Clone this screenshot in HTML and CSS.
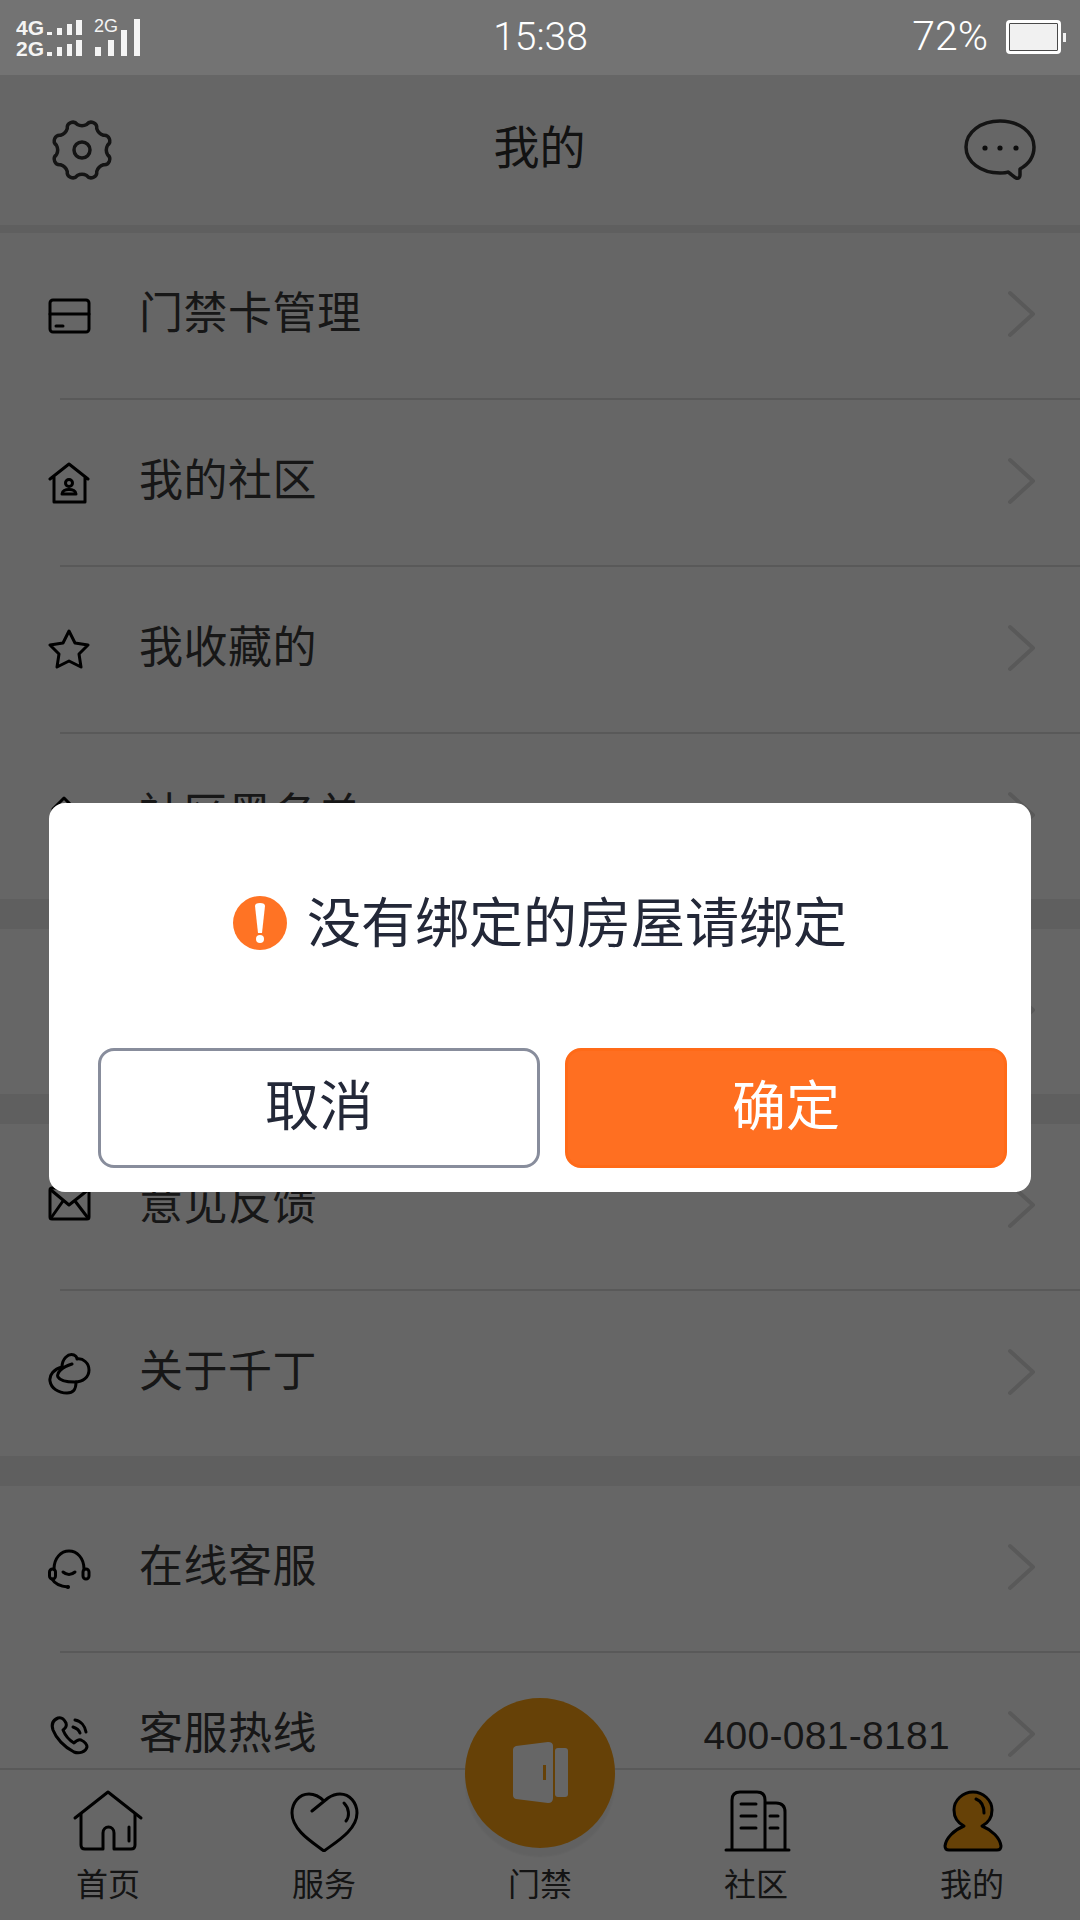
FILE: index.html
```html
<!DOCTYPE html>
<html lang="zh-CN">
<head>
  <meta charset="UTF-8">
  <title>我的</title>
  <meta name="viewport" content="width=device-width, initial-scale=1">
  <link rel="stylesheet" href="styles.css">
</head>
<body>
  <div class="screen">
    <div class="statusbar">
      <svg class="signal" width="130" height="48" viewBox="0 -8 130 48">
        <text class="sig-text" x="0" y="16">4G</text>
        <text class="sig-text" x="0" y="37">2G</text>
        <text class="sig-thin" x="78" y="13">2G</text>
        <path d="M31 13h5v3h-5zM41 9h5v7h-5zM51 5h5v11h-5zM60 1h6v15h-6z"/>
        <path d="M31 33h5v4h-5zM41 28h5v9h-5zM51 25h5v12h-5zM60 21h6v16h-6z"/>
        <path d="M79 28h6v9h-6zM92 21h6v16h-6zM105 11h6v26h-6zM118 0h6v37h-6z"/>
      </svg>
      <div class="clock">15:38</div>
      <div class="power">
        <span>72%</span>
        <div class="battery"></div>
      </div>
    </div>

    <div class="navbar">
      <svg class="ico gear" width="66" height="66" viewBox="-33 -33 66 66">
        <path d="M25.56 4.74A5.6 5.6 0 0 1 21.43 14.73A10 10 0 0 0 14.73 21.43A5.6 5.6 0 0 1 4.74 25.56A10 10 0 0 0 -4.74 25.56A5.6 5.6 0 0 1 -14.73 21.43A10 10 0 0 0 -21.43 14.73A5.6 5.6 0 0 1 -25.56 4.74A10 10 0 0 0 -25.56 -4.74A5.6 5.6 0 0 1 -21.43 -14.73A10 10 0 0 0 -14.73 -21.43A5.6 5.6 0 0 1 -4.74 -25.56A10 10 0 0 0 4.74 -25.56A5.6 5.6 0 0 1 14.73 -21.43A10 10 0 0 0 21.43 -14.73A5.6 5.6 0 0 1 25.56 -4.74A10 10 0 0 0 25.56 4.74Z"/>
        <circle r="8"/>
      </svg>
      <h1>我的</h1>
      <svg class="ico bubble" width="72" height="62" viewBox="0 0 72 62">
        <path d="M36 2C17 2 2 13 2 28C2 43 17 54 36 54C39 54 42 54 44 53C47 55 50 58 52 59C55 60 56 58 56 56V50C65 45 70 37 70 28C70 13 55 2 36 2Z"/>
        <circle class="solid" cx="21" cy="29" r="2.6"/>
        <circle class="solid" cx="36" cy="29" r="2.6"/>
        <circle class="solid" cx="52" cy="29" r="2.6"/>
      </svg>
    </div>

    <div class="list">
      <div class="group">
        <div class="row">
          <svg class="ico" width="44" height="44" viewBox="0 0 44 44"><rect x="2" y="6" width="39" height="32" rx="3"/><path d="M2 20H41M8 32H15"/></svg>
          <span class="label">门禁卡管理</span>
          <svg class="chevron" width="30" height="48" viewBox="0 0 30 48"><path d="M3 3L26 24L3 45"/></svg>
        </div>
        <div class="row">
          <svg class="ico" width="44" height="44" viewBox="0 0 44 44"><path d="M2 18L21 3L40 18M6 16V41H37V16"/><circle cx="21" cy="22" r="3.5"/><path d="M14 33C14 27 28 27 28 33Z"/></svg>
          <span class="label">我的社区</span>
          <svg class="chevron" width="30" height="48" viewBox="0 0 30 48"><path d="M3 3L26 24L3 45"/></svg>
        </div>
        <div class="row">
          <svg class="ico" width="44" height="44" viewBox="0 0 44 44"><path d="M21 3L27 15L40 17L31 26L33 39L21 33L9 39L11 26L2 17L15 15Z"/></svg>
          <span class="label">我收藏的</span>
          <svg class="chevron" width="30" height="48" viewBox="0 0 30 48"><path d="M3 3L26 24L3 45"/></svg>
        </div>
        <div class="row">
          <svg class="ico" width="44" height="44" viewBox="0 0 44 44"><path d="M5 14L16 3L27 14V40H5Z"/></svg>
          <span class="label">社区黑名单</span>
          <svg class="chevron" width="30" height="48" viewBox="0 0 30 48"><path d="M3 3L26 24L3 45"/></svg>
        </div>
      </div>
      <div class="group">
        <div class="row">
          <svg class="chevron" width="30" height="48" viewBox="0 0 30 48"><path d="M3 3L26 24L3 45"/></svg>
        </div>
      </div>
      <div class="group">
        <div class="row">
          <svg class="ico" width="44" height="44" viewBox="0 0 44 44"><rect x="2" y="3" width="39" height="31" rx="2"/><path d="M3 5L21 20L40 5M3 33L15 16M40 33L27 16"/></svg>
          <span class="label">意见反馈</span>
          <svg class="chevron" width="30" height="48" viewBox="0 0 30 48"><path d="M3 3L26 24L3 45"/></svg>
        </div>
        <div class="row">
          <svg class="ico" width="44" height="44" viewBox="0 0 44 44"><path d="M14 15C14 7 20 1 26 3C28 4 29 6 29 7C35 6 41 11 41 18C41 25 35 30 27 30C20 30 12 29 10 25C8 21 14 15 24 12"/><path d="M14 15C6 17 1 23 2 29C3 36 10 41 19 41C25 41 28 38 28 30"/></svg>
          <span class="label">关于千丁</span>
          <svg class="chevron" width="30" height="48" viewBox="0 0 30 48"><path d="M3 3L26 24L3 45"/></svg>
        </div>
      </div>
      <div class="group">
        <div class="row">
          <svg class="ico" width="44" height="44" viewBox="0 0 44 44"><path d="M6 22C6 11 13 4 21 4C29 4 36 11 36 22M15 25Q21 30 27 25M4 32Q8 39 20 40"/><rect x="1.5" y="22" width="6" height="10" rx="3"/><rect x="35" y="22" width="6" height="10" rx="3"/><circle class="solid" cx="20" cy="40" r="2"/></svg>
          <span class="label">在线客服</span>
          <svg class="chevron" width="30" height="48" viewBox="0 0 30 48"><path d="M3 3L26 24L3 45"/></svg>
        </div>
        <div class="row">
          <svg class="ico" width="44" height="44" viewBox="0 0 44 44"><path d="M10 4C5 6 3 10 5 16C8 24 16 33 26 38C31 40 38 38 39 33C39 30 37 28 33 26C30 25 28 27 26 29C21 26 17 21 15 16C18 14 19 12 18 9C16 5 13 3 10 4Z"/><path d="M27 6C33 7 37 12 38 18M25 13C28 14 31 16 32 19"/></svg>
          <span class="label">客服热线</span>
          <span class="phone">400-081-8181</span>
          <svg class="chevron" width="30" height="48" viewBox="0 0 30 48"><path d="M3 3L26 24L3 45"/></svg>
        </div>
      </div>
    </div>

    <div class="tabbar">
      <div class="tab">
        <svg class="ico tab-ico" width="72" height="62" viewBox="0 0 72 62"><path d="M3 28L36 2L69 28"/><path d="M9 24V55Q9 59 13 59H31V43C31 35 42 35 42 43V59H59Q63 59 63 55V24M57 37V51"/></svg>
        <span>首页</span>
      </div>
      <div class="tab">
        <svg class="ico tab-ico" width="72" height="62" viewBox="0 0 72 62"><path d="M36 11C32 7 27 4 21 4C11 4 4 13 4 23C4 40 24 52 36 61C48 52 69 40 69 23C69 13 62 4 52 4C47 4 43 6 40 8L24 21"/><path d="M56 13C61 18 62 26 58 31"/></svg>
        <span>服务</span>
      </div>
      <div class="tab">
        <div class="door-btn">
          <svg width="56" height="62" viewBox="0 0 56 62">
            <path class="door" d="M4 4L36 0Q41 0 41 4V56Q41 61 36 61L4 57Q1 56 1 53V8Q1 5 4 4Z"/>
            <rect class="door" x="43" y="6" width="13" height="49" rx="3"/>
            <rect class="door-handle" x="31" y="23" width="3" height="15"/>
          </svg>
        </div>
        <div class="tab-ico"></div>
        <span>门禁</span>
      </div>
      <div class="tab">
        <svg class="ico tab-ico" width="72" height="62" viewBox="0 0 72 62"><path d="M6 60H69M12 59V10Q12 2 20 2H37Q45 2 45 10V59M45 13H56Q65 13 65 22V59M21 14H36M21 26H36M21 38H36M50 26H58M50 38H58"/></svg>
        <span>社区</span>
      </div>
      <div class="tab">
        <svg class="ico tab-ico" width="72" height="62" viewBox="0 0 72 62"><path class="me" d="M28 36C22 33 18 27 18 20C18 10 27 2 37 2C47 2 56 10 56 20C56 27 52 33 46 36C56 40 64 48 65 56C65 59 63 60 61 60H13C11 60 9 59 9 56C10 48 18 40 28 36Z"/><path d="M40 9C45 11 48 16 48 23"/></svg>
        <span>我的</span>
      </div>
    </div>

    <div class="mask">
      <div class="dialog">
        <div class="message">
          <svg width="54" height="54" viewBox="0 0 54 54">
            <circle class="alert-bg" cx="27" cy="27" r="27"/>
            <path class="alert-mark" d="M22 10Q22 7 27 7Q32 7 32 10L29 37H25Z"/>
            <circle class="alert-mark" cx="27" cy="43" r="4"/>
          </svg>
          <span>没有绑定的房屋请绑定</span>
        </div>
        <div class="actions">
          <button class="btn btn-cancel" type="button">取消</button>
          <button class="btn btn-ok" type="button">确定</button>
        </div>
      </div>
    </div>
  </div>
</body>
</html>
```

FILE: styles.css
```css
* {
  box-sizing: border-box;
}
body {
  margin: 0;
  font-family: "Noto Sans CJK SC", "Liberation Sans", sans-serif;
  background: #fff;
}
.screen {
  position: relative;
  width: 1080px;
  height: 1920px;
  display: flex;
  flex-direction: column;
  overflow: hidden;
  background: #fff;
}

/* status bar sits above the mask */
.statusbar {
  position: relative;
  z-index: 2;
  flex: none;
  height: 75px;
  padding: 0 15px 0 16px;
  display: grid;
  grid-template-columns: 1fr auto 1fr;
  align-items: center;
  background: #737373;
  color: #fff;
  font-family: Roboto, "Liberation Sans", sans-serif;
  font-weight: 300;
  font-size: 39px;
}
.signal {
  display: block;
  align-self: start;
  margin-top: 11px;
  fill: #f4f4f4;
}
.sig-text {
  font-family: "Liberation Sans", sans-serif;
  font-size: 21px;
  font-weight: 700;
}
.sig-thin {
  font-family: "Liberation Sans", sans-serif;
  font-size: 18px;
  font-weight: 400;
}
.clock {
  margin-top: -1px;
}
.power {
  display: flex;
  justify-content: flex-end;
  align-items: center;
  gap: 18px;
  margin-top: -4px;
  font-size: 41px;
}
.battery {
  position: relative;
  width: 55px;
  height: 34px;
  margin-right: 4px;
  margin-top: 2px;
  border: 3px solid #fff;
  border-radius: 4px;
  background: #f1f1f1;
  box-shadow: inset 0 0 0 1px #4a4a4a;
}
.battery::after {
  content: "";
  position: absolute;
  right: -8px;
  top: 10px;
  width: 3px;
  height: 9px;
  background: #f1f1f1;
}

.navbar {
  flex: none;
  height: 150px;
  padding: 0 44px 0 49px;
  display: flex;
  justify-content: space-between;
  align-items: center;
  background: #fff;
}
h1 {
  margin: -12px 0 0 0;
  font-size: 46px;
  font-weight: 400;
  color: #2e2e2e;
}

.ico {
  flex: none;
  fill: none;
  stroke: #000;
  stroke-width: 3;
  stroke-linecap: round;
  stroke-linejoin: round;
}
.ico .solid {
  fill: #000;
  stroke: none;
}
.gear,
.bubble {
  stroke: #333;
  stroke-width: 3.5;
}
.bubble .solid {
  fill: #222;
}

.list {
  flex: 1;
  min-height: 0;
  padding-top: 8px;
  overflow: hidden;
  background: #eee;
}
.group {
  margin-bottom: 30px;
  background: #fff;
}
.row {
  height: 167px;
  margin-left: 60px;
  padding-right: 43px;
  display: flex;
  align-items: center;
  border-bottom: 2px solid #dedede;
}
.row:last-child {
  height: 165px;
  border-bottom: none;
}
.row > .ico {
  margin-left: -12px;
}
.label {
  margin-left: 47px;
  margin-top: -12px;
  font-size: 44px;
  letter-spacing: 0.5px;
  color: #3a3a3a;
}
.chevron {
  flex: none;
  margin-top: -3px;
  margin-left: auto;
  fill: none;
  stroke: #dedede;
  stroke-width: 4;
  stroke-linecap: round;
  stroke-linejoin: round;
}
.phone {
  margin-left: auto;
  font-family: "Liberation Sans", sans-serif;
  font-size: 39px;
  letter-spacing: 0.3px;
  color: #3a3a3a;
}
.phone + .chevron {
  margin-left: 57px;
}

.tabbar {
  position: relative;
  flex: none;
  height: 152px;
  display: grid;
  grid-template-columns: repeat(5, 1fr);
  background: #fff;
  border-top: 2px solid #dedede;
}
.tab {
  position: relative;
  display: flex;
  flex-direction: column;
  align-items: center;
  padding-top: 20px;
  font-size: 32px;
  color: #333;
}
.tab-ico {
  display: block;
  width: 72px;
  height: 62px;
  margin-bottom: 7px;
}
.me {
  fill: #ffa312;
}
.door-btn {
  position: absolute;
  left: 33px;
  top: -72px;
  width: 150px;
  height: 150px;
  display: flex;
  justify-content: center;
  align-items: center;
  border-radius: 50%;
  background: #ffa312;
  box-shadow: 0 9px 2px rgba(0, 0, 0, 0.05);
}
.door {
  fill: #fff;
}
.door-handle {
  fill: #ffa312;
}

/* dim layer + alert dialog */
.mask {
  position: absolute;
  z-index: 1;
  inset: 0;
  background: rgba(0, 0, 0, 0.6);
}
.dialog {
  position: absolute;
  left: 49px;
  top: 803px;
  width: 982px;
  height: 389px;
  padding: 0 24px 24px 49px;
  display: flex;
  flex-direction: column;
  border-radius: 16px;
  background: #fff;
}
.message {
  flex: 1;
  display: flex;
  justify-content: center;
  align-items: center;
  gap: 20px;
  padding-right: 25px;
  padding-bottom: 6px;
  font-size: 54px;
  color: #232838;
}
.message span {
  margin-top: -7px;
}
.actions {
  display: flex;
  gap: 25px;
}
.btn {
  flex: 1;
  height: 120px;
  padding: 0 0 12px;
  font-family: inherit;
  font-size: 54px;
  border-radius: 16px;
}
.btn-cancel {
  border: 3px solid #888d9c;
  background: #fff;
  color: #232838;
}
.btn-ok {
  border: 3px solid #ff6a18;
  background: #ff6f21;
  color: #fff;
}
.alert-bg {
  fill: #ff7324;
}
.alert-mark {
  fill: #fff;
}
```
